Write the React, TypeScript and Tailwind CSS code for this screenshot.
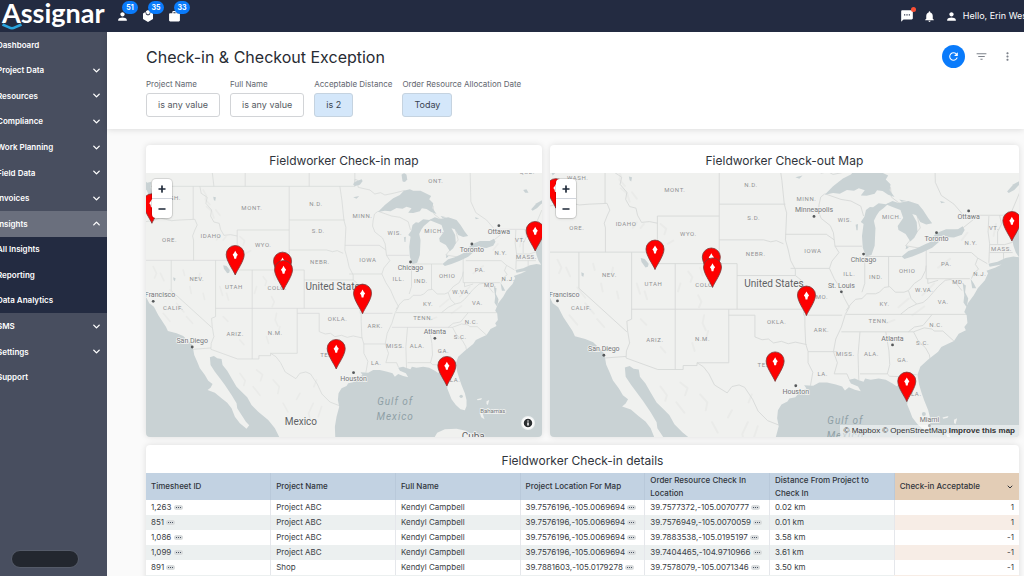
import React from 'react';
import clsx from 'clsx';
import { ChevronDown, ChevronUp, Plus, Minus, Info } from 'lucide-react';
import { MdPerson, MdNotifications, MdRefresh, MdFilterList, MdMoreVert, MdSms, MdWork } from 'react-icons/md';

interface NavItem {
  label: string;
  arrow?: 'down' | 'up';
  sub?: boolean;
}

interface MapView {
  width: number;
  height: number;
  scale: number;
  x: number;
  y: number;
}

interface City {
  name: string;
  x: number;
  y: number;
  side: 'above' | 'below';
  detail?: boolean;
}

const navItems: NavItem[] = [
  { label: 'Dashboard' },
  { label: 'Project Data', arrow: 'down' },
  { label: 'Resources', arrow: 'down' },
  { label: 'Compliance', arrow: 'down' },
  { label: 'Work Planning', arrow: 'down' },
  { label: 'Field Data', arrow: 'down' },
  { label: 'Invoices', arrow: 'down' },
  { label: 'Insights', arrow: 'up' },
  { label: 'All Insights', sub: true },
  { label: 'Reporting', sub: true },
  { label: 'Data Analytics', sub: true },
  { label: 'SMS', arrow: 'down' },
  { label: 'Settings', arrow: 'down' },
  { label: 'Support' },
];

const filters = [
  { id: 'project-name', label: 'Project Name', value: 'is any value', active: false },
  { id: 'full-name', label: 'Full Name', value: 'is any value', active: false },
  { id: 'distance', label: 'Acceptable Distance', value: 'is 2', active: true },
  { id: 'allocation-date', label: 'Order Resource Allocation Date', value: 'Today', active: true },
];

const columns = [
  'Timesheet ID',
  'Project Name',
  'Full Name',
  'Project Location For Map',
  'Order Resource Check In Location',
  'Distance From Project to Check In',
];

const rows = [
  { id: '1,263', project: 'Project ABC', name: 'Kendyl Campbell', location: '39.7576196,-105.0069694', checkIn: '39.7577372,-105.0070777', distance: '0.02 km', ok: '1' },
  { id: '851', project: 'Project ABC', name: 'Kendyl Campbell', location: '39.7576196,-105.0069694', checkIn: '39.7576949,-105.0070059', distance: '0.01 km', ok: '1' },
  { id: '1,086', project: 'Project ABC', name: 'Kendyl Campbell', location: '39.7576196,-105.0069694', checkIn: '39.7883538,-105.0195197', distance: '3.58 km', ok: '-1' },
  { id: '1,099', project: 'Project ABC', name: 'Kendyl Campbell', location: '39.7576196,-105.0069694', checkIn: '39.7404465,-104.9710966', distance: '3.61 km', ok: '-1' },
  { id: '891', project: 'Shop', name: 'Kendyl Campbell', location: '39.7881603,-105.0179278', checkIn: '39.7578079,-105.0071346', distance: '3.50 km', ok: '-1' },
];

// Both maps share one coordinate space; each view only pans and scales it
const checkInView: MapView = { width: 396, height: 264, scale: 0.3333, x: -6, y: -33 };
const checkOutView: MapView = { width: 470, height: 264, scale: 0.3965, x: -8, y: -64 };

const water = [
  // Pacific and Gulf of California
  'M-40 440L18 470L28 490L42 500L55 525L78 560L84 573L110 580L130 588L140 598L155 612L160 628L163 645L172 665L180 685L195 705L205 722L218 732L212 743L203 750L225 758L245 775L262 788L275 805L285 830L300 850L320 866L328 856L318 845L305 825L292 805L290 790L275 765L255 735L240 715L225 695L212 675L210 652L222 648L232 655L245 657L248 675L262 692L275 715L290 740L305 755L322 772L335 795L355 815L385 840L405 865L420 895V940H-40Z',
  // Gulf of Mexico and Atlantic
  'M588 940L585 860L590 830L598 800L594 780L596 760L605 745L620 738L625 730L640 727L650 715L668 705L662 697L685 698L700 690L720 690L742 695L758 700L765 710L775 702L790 708L805 712L798 700L780 692L775 683L790 680L800 684L812 688L816 680L830 683L850 680L868 683L885 692L895 699L905 692L920 690L928 705L925 725L922 745L930 765L935 778L948 795L962 808L975 811L980 798L980 780L975 760L965 735L958 715L952 695L948 670L955 650L975 632L1000 612L1008 600L1025 592L1040 585L1052 567L1070 558L1066 550L1074 540L1072 520L1066 512L1075 490L1090 470L1100 452L1118 432L1126 414L1122 408L1145 400L1160 392L1130 398L1127 390L1150 385L1170 376L1190 372L1204 374L1196 362L1190 345L1187 330L1192 312L1206 298L1260 270V940Z',
  // Puget Sound
  'M-40 110L10 118L22 128L34 125L32 140L36 160L28 168L20 150L5 146L-40 148Z',
  // Superior
  'M714 216L735 195L760 175L780 165L792 152L810 148L820 152L842 152L862 162L874 168L868 178L880 190L878 205L890 222L874 216L860 207L846 205L840 214L820 219L805 218L815 205L800 200L788 206L770 204L752 214L735 212Z',
  // Michigan
  'M818 255L828 247L836 248L850 238L868 240L876 238L862 250L852 258L845 268L838 282L842 300L840 345L832 368L818 372L810 350L808 320L812 290L805 285L814 272Z',
  // Huron and Georgian Bay
  'M868 240L885 232L900 237L925 232L950 240L962 255L975 275L985 288L970 291L955 285L945 268L935 265L946 285L948 310L940 325L930 334L918 315L900 305L898 295L912 275L905 255L885 247Z',
  // Erie
  'M908 372L925 358L945 352L970 340L995 330L1005 333L985 350L960 362L935 372L915 378Z',
  // Ontario and the St. Lawrence
  'M983 325L998 312L1020 303L1050 303L1062 296L1067 305L1060 317L1040 324L1010 322L995 328Z',
  'M1174 208L1190 190L1208 180L1206 190L1192 204L1178 212Z',
  // Chesapeake and Delaware
  'M1062 440L1070 445L1068 462L1076 478L1072 500L1064 488L1066 470Z',
  'M1082 428L1090 440L1096 452L1086 452Z',
  // inland lakes
  'M785 104Q793 95 800 104L802 118Q796 130 788 124Z',
  'M642 128L652 122L666 118L668 124L660 134L646 138L640 134Z',
  'M250 376L260 378L270 390L268 398L262 400L252 386Z',
  'M920 344L926 350L918 354Z',
  'M792 292L798 290L797 306L794 306Z',
  'M640 172L658 168L650 176Z',
  'M1150 150L1160 148L1166 158L1156 158Z',
  'M220 170L228 172L226 183L222 180Z',
  'M100 412L107 415L105 424L101 420Z',
  'M902 228L920 232L908 234Z',
  'M1005 232L1018 235L1008 238Z',
];

const islands = [
  'M884 892L892 878L915 868L950 866L978 872L1000 886L1040 894L1020 920H900Z',
  'M1011 778L1026 774L1024 779L1013 781Z',
  'M1040 784L1048 780L1044 795L1040 792Z',
  'M1020 818L1028 820L1034 838L1024 832Z',
  'M1054 806L1062 812L1064 822L1058 814Z',
];

const borders = [
  'M-40 139H645V118L652 120L655 142L690 150L705 162L722 158L735 165L760 160L792 152M213 60L222 139M316 60V139M508 60V139M645 60V139M990 60L993 185L1008 218L1040 240L1064 268L1165 268',
  'M792 152L840 168L880 198L882 222L900 236L945 262L955 300L918 345L960 352L1010 315L1060 302L1100 270',
  'M160 139V238M-40 248L18 245L45 240L60 234L95 242L120 240L165 238L172 255L165 270L158 288L161 300V361M-40 361H292',
  'M180 139L184 160L202 172L198 190L215 210L212 228L222 246L238 250L242 268L252 286L272 284L292 288M292 270V390M292 270H448M448 139V390M292 390H493M448 240H615',
  'M448 330H560L578 335L592 332L610 340M493 390V505M493 420H640M227 361V530M227 505H664M94 361V452L215 562M227 530L215 535L217 560L222 590L214 610L213 628M160 628L213 624',
  'M337 390V657M472 505V640H392V647H357V657H293L213 628M392 640L408 650L422 668L436 696L468 716L480 700L498 696L512 702L532 732L546 762L570 786L598 797',
  'M472 520H538V575L556 582L572 580L585 590L605 586L622 592L640 588L668 594M664 520V545L666 592L672 612V640L684 664L678 698M672 612H746M661 505V520H758',
  'M600 139L606 180L612 240L618 262L615 330L622 355L628 382L640 405L640 420L655 432L655 470L661 505M615 316H718M628 402H726M700 240L704 222L714 214M700 240L698 258L705 276L728 294L736 312L738 330',
  'M718 316L738 330L740 346L750 362L732 384L726 402L738 428L752 450L764 478L776 500L766 518L756 550L742 580L736 612L746 640L738 668H770L776 682M740 346H808M715 214L755 228L780 232L805 245L812 270',
  'M815 375V440L808 462M875 372V448M815 372H908M768 508L780 492L792 480L808 478L820 466L842 466L852 462L864 450L878 448L892 462L914 462L925 458L940 440L958 428L968 408L970 395M970 342V428H1080M978 362H1084',
  'M768 518H1072M756 562H938M925 562L940 550L962 546L985 518M925 458L932 478L946 492L962 488L974 478L988 462L1000 448L1018 432L1032 430L1046 440L1060 458M946 492L925 502L905 518M974 428V440L1000 432',
  'M803 562L798 620L800 684M868 562L876 610L878 645L872 668M803 668H872L878 674L925 676L930 670L946 670M938 562L950 585L968 602L978 620L980 632M938 562L965 552L985 555L990 560H1012L1045 590',
  'M1084 362L1100 376L1094 392L1102 404L1090 414L1084 428M1100 376L1124 390M1128 270L1126 310L1130 340L1128 388M1155 268L1160 290L1150 310V340M1130 342H1168L1188 336M1130 362H1188M1165 362V378M1165 268L1178 262L1184 300L1190 325M1184 262L1206 210',
];

const terrain = [
  'M190 150l10 18l-4 10l14 16M200 200l16 14l6 20M228 210l12 16M230 300l10 -14M250 300l8 -10M300 290l14 12l-4 14M318 340l14 -8M350 440l-6 20M370 410l10 14l-4 12M400 400l6 20M395 470l8 16l-6 14M410 520l-4 20l8 18M420 560l-6 22',
  'M40 380l10 20l-6 14M62 400l10 22M90 450l20 26M70 520l20 24M110 490l22 26M140 530l18 20M240 440l8 26M260 460l6 20M250 530l14 14M300 600l12 14M380 590l6 20M180 400l-4 20M130 390l4 16M190 460l4 18M150 440l4 20',
  'M350 690l18 14l-6 18M400 720l18 20l-4 20M430 790l14 26M520 790l-14 30l6 24M545 800l-10 30M480 760l-10 18M300 700l16 22l-4 14M340 740l20 26M530 720l-8 20',
  'M900 500l26 -22M935 520l30 -22M960 470l30 -30M870 540l20 -8M1000 400l30 -22M1060 330l14 -18M1140 320l6 -30',
];

const states: [string, number, number][] = [
  ['WASH.', 91, 173], ['MONT.', 336, 204], ['N.D.', 528, 192], ['S.D.', 535, 274], ['IDAHO', 213, 289], ['WYO.', 370, 315],
  ['ORE.', 89, 300], ['NEBR.', 540, 366], ['NEV.', 171, 418], ['UTAH', 282, 442], ['COLO.', 412, 445], ['CALIF.', 100, 503],
  ['ARIZ.', 286, 582], ['N.M.', 406, 579], ['OKLA.', 593, 537], ['TEX.', 563, 645], ['MINN.', 668, 227], ['WIS.', 765, 279],
  ['MICH.', 883, 272], ['IOWA', 684, 359], ['ILL.', 776, 417], ['IND.', 843, 423], ['OHIO', 922, 409], ['PA.', 1021, 390],
  ['N.Y.', 1083, 339], ['VT.', 1141, 300], ['MASS.', 1160, 352], ['N.J.', 1105, 416], ['MD.', 1051, 436], ['W.VA.', 965, 457],
  ['VA.', 1013, 488], ['KY.', 865, 491], ['TENN.', 850, 534], ['N.C.', 995, 545], ['S.C.', 961, 590], ['ARK.', 706, 558],
  ['MISS.', 766, 618], ['ALA.', 832, 619], ['GA.', 911, 632], ['FLA.', 940, 720], ['LA.', 709, 668], ['ONT.', 888, 124],
  ['QUE.', 1162, 97],
];

const cities: City[] = [
  { name: 'San Francisco', x: 40, y: 484, side: 'above' },
  { name: 'San Diego', x: 157, y: 621, side: 'above' },
  { name: 'Chicago', x: 812, y: 366, side: 'below' },
  { name: 'Ottawa', x: 1077, y: 257, side: 'below' },
  { name: 'Toronto', x: 996, y: 312, side: 'below' },
  { name: 'Atlanta', x: 885, y: 595, side: 'above' },
  { name: 'Houston', x: 641, y: 698, side: 'below' },
  { name: 'Minneapolis', x: 687, y: 271, side: 'above', detail: true },
  { name: 'St. Louis', x: 756, y: 461, side: 'above', detail: true },
  { name: 'Miami', x: 978, y: 799, side: 'above', detail: true },
];

const pins: [number, number][] = [
  [36, 250], [286, 405], [428, 425], [431, 450], [589, 687], [668, 521], [921, 738], [1186, 333],
];

const Pin = ({ x, y }: { x: number; y: number }) => (
  <g transform={`translate(${x} ${y})`}>
    <path
      d="M0 0C-2 -5 -9 -14 -9 -20.5A9 9 0 0 1 9 -20.5C9 -14 2 -5 0 0Z"
      fill="#fe0000"
      stroke="#7a3a3a"
      strokeWidth="0.8"
    />
    <path d="M0 -24.2L1.2 -22L2.6 -20.2L1.4 -18.6L0.9 -16.2H-0.9L-1.4 -18.6L-2.6 -20.2L-1.2 -22Z" fill="#fff" />
  </g>
);

const UsMap = ({ view, title, detailed = false }: { view: MapView; title: string; detailed?: boolean }) => {
  const px = (x: number) => view.x + x * view.scale;
  const py = (y: number) => view.y + y * view.scale;

  return (
    <svg
      role="img"
      aria-label={title}
      viewBox={`0 0 ${view.width} ${view.height}`}
      preserveAspectRatio="xMidYMid slice"
      className="block h-full w-full bg-[#f0f1ef] font-['Roboto',sans-serif]"
    >
      <g transform={`translate(${view.x} ${view.y}) scale(${view.scale})`}>
        <g fill="none" stroke="#eaebe9" strokeWidth="5" strokeLinejoin="round" strokeLinecap="round">
          {terrain.map((d) => (
            <path key={d} d={d} />
          ))}
        </g>
        <g fill="none" stroke="#d6d8d7" strokeWidth="2.2" strokeLinejoin="round">
          {borders.map((d) => (
            <path key={d} d={d} />
          ))}
        </g>
        <g fill="#c9d2d4" strokeLinejoin="round">
          {water.map((d) => (
            <path key={d} d={d} />
          ))}
        </g>
        <circle cx="964" cy="769" r="5" fill="#c9d2d4" />
        <g fill="#f0f1ef">
          {islands.map((d) => (
            <path key={d} d={d} />
          ))}
        </g>
      </g>

      <g textAnchor="middle" fill="#909294" className="text-[6px] tracking-widest">
        {states.map(([name, x, y]) => (
          <text key={name} x={px(x)} y={py(y) + 2}>
            {name}
          </text>
        ))}
        {detailed && <text x={px(707)} y={py(473) + 2}>MO.</text>}
      </g>

      <g textAnchor="middle" fill="#75777a" stroke="#f3f4f2" strokeWidth="1.5" paintOrder="stroke" className="text-[7px]">
        {cities
          .filter((city) => detailed || !city.detail)
          .map((city) => (
            <g key={city.name}>
              <circle cx={px(city.x)} cy={py(city.y)} r="1.4" fill="#55585a" stroke="none" />
              <text x={px(city.x)} y={py(city.y) + (city.side === 'above' ? -4 : 8)}>
                {city.name}
              </text>
            </g>
          ))}
        {!detailed && <text x={px(1059)} y={py(812) + 2} className="text-[6px]">Bahamas</text>}
      </g>

      <g textAnchor="middle" fill="#8fa0a6" className="text-[10px] italic tracking-widest">
        <text x={px(766)} y={py(784) + 4}>Gulf of</text>
        <text x={px(766)} y={py(784) + 19}>Mexico</text>
      </g>

      <g textAnchor="middle" fill="#5f6265" stroke="#f3f4f2" strokeWidth="1.5" paintOrder="stroke" className="text-[10px]">
        <text x={px(586)} y={py(439) + 4}>United States</text>
        {!detailed && <text x={px(483)} y={py(843) + 4}>Mexico</text>}
        {!detailed && <text x={px(1000)} y={py(889) + 4}>Cuba</text>}
      </g>

      {pins.map(([x, y]) => (
        <Pin key={`${x}-${y}`} x={px(x)} y={py(y)} />
      ))}
    </svg>
  );
};

const ZoomControl = () => (
  <div className="absolute top-1.5 left-1.5 flex w-5 flex-col divide-y divide-gray-300 rounded bg-white text-gray-800 shadow ring-1 ring-black/10">
    <button aria-label="Zoom in" className="flex h-5 items-center justify-center">
      <Plus size={10} strokeWidth={4} />
    </button>
    <button aria-label="Zoom out" className="flex h-[19px] items-center justify-center">
      <Minus size={10} strokeWidth={4} />
    </button>
  </div>
);

const Card = ({ title, className, children }: { title: string; className?: string; children: React.ReactNode }) => (
  <section className={clsx('overflow-hidden rounded bg-white shadow-[0_0_6px_rgba(0,0,0,0.12)]', className)}>
    <h2 className="flex h-7 items-center justify-center pt-1 text-[12px] text-[#30343b]">{title}</h2>
    {children}
  </section>
);

const CountBadge = ({ label, count, children }: { label: string; count: number; children: React.ReactNode }) => (
  <button aria-label={label} className="relative flex size-3 items-center justify-center text-white">
    {children}
    <span className="absolute -top-[9px] left-1.5 flex h-[13px] w-4 items-center justify-center rounded-full bg-[#0a7bfb] text-[7px] leading-[9px] font-bold">
      {count}
    </span>
  </button>
);

const MoreChip = () => (
  <button aria-label="More" className="inline-flex h-[5px] w-[9px] items-center justify-center gap-px rounded-full bg-[#d9dcdd] align-middle">
    <span className="size-px bg-gray-600" />
    <span className="size-px bg-gray-600" />
    <span className="size-px bg-gray-600" />
  </button>
);

const TopBar = () => (
  <header className="relative flex h-8 shrink-0 items-center bg-[#232b41] text-white">
    <a href="#home" className="relative h-8 w-[116px] shrink-0 pl-0.5 font-['Lato',sans-serif] text-[27px] leading-[26px]">
      <span className="font-bold">Assignar</span>
      <svg viewBox="0 0 22 7" className="absolute bottom-0.5 left-px h-[7px] w-[22px]" fill="none">
        <path d="M1.5 1.5L8 4.4Q11 6 14 4.4L20.5 1.5" stroke="#2aa5df" strokeWidth="2.6" />
      </svg>
    </a>
    <div className="flex items-center gap-[14px]">
      <CountBadge label="People" count={51}>
        <MdPerson size={13} className="shrink-0" />
      </CountBadge>
      <CountBadge label="Assets" count={35}>
        <svg viewBox="0 0 12 12" className="size-3" fill="currentColor">
          <path d="M1 3.4L3.4 2L4 4.6L6 5.6L8 4.6L8.6 2L11 3.4V9L6 12L1 9Z" />
          <path d="M6 0L8.2 1.2L7.4 3.8L6 4.4L4.6 3.8L3.8 1.2Z" />
        </svg>
      </CountBadge>
      <CountBadge label="Jobs" count={33}>
        <MdWork size={13} className="shrink-0" />
      </CountBadge>
    </div>
    <div className="ml-auto flex shrink-0 items-center">
      <button aria-label="Messages" className="relative mr-[9px]">
        <MdSms size={14} />
        <span className="absolute -top-0.5 -right-0.5 size-[5px] rounded-full bg-[#fb4f34]" />
      </button>
      <button aria-label="Notifications" className="mr-[9px]">
        <MdNotifications size={13} />
      </button>
      <MdPerson size={13} />
      <a href="#account" className="-mr-1.5 ml-[5px] text-[9px] whitespace-nowrap">
        Hello, Erin West
      </a>
    </div>
  </header>
);

const Sidebar = () => (
  <aside className="flex w-[107px] shrink-0 flex-col overflow-hidden bg-[#484e5f] text-white">
    <nav>
      <ul className="grid h-[358px] auto-rows-fr">
        {navItems.map((item) => (
          <li
            key={item.label}
            className={clsx(item.sub && 'bg-[#232b41]', item.arrow === 'up' && 'bg-[#6a6f7d]')}
          >
            <a href="#nav" className="-ml-[3px] flex h-full items-center justify-between pr-[5px] text-[8px] font-semibold whitespace-nowrap">
              {item.label}
              {item.arrow === 'down' && <ChevronDown size={11} strokeWidth={3} />}
              {item.arrow === 'up' && <ChevronUp size={11} strokeWidth={3} />}
            </a>
          </li>
        ))}
      </ul>
    </nav>
    <div className="mt-auto mb-2 ml-[11px] h-[18px] w-[68px] rounded-full border border-[#555b69] bg-[#23272f]" />
  </aside>
);

const DetailsTable = () => (
  <table className="w-full table-fixed border-collapse text-left text-[8px] text-[#3a3e45]">
    <thead>
      <tr className="h-[27px] bg-[#c2d2e2] leading-[13px] text-[#30343b]">
        {columns.map((column) => (
          <th key={column} className="border-r border-[#b9c9da] px-[5px] py-0 font-medium">
            {column}
          </th>
        ))}
        <th className="bg-[#e3cdb6] px-[5px] py-0 font-medium">
          <button className="flex w-full items-center justify-between">
            Check-in Acceptable
            <ChevronDown size={8} strokeWidth={3} />
          </button>
        </th>
      </tr>
    </thead>
    <tbody>
      {rows.map((row) => (
        <tr key={row.id} className="group h-[15px] leading-[15px] whitespace-nowrap even:bg-[#ecf0f0]">
          <td className="border-r border-gray-200 px-[5px] py-0">{row.id} <MoreChip /></td>
          <td className="border-r border-gray-200 px-[5px] py-0">{row.project}</td>
          <td className="border-r border-gray-200 px-[5px] py-0">{row.name}</td>
          <td className="border-r border-gray-200 px-[5px] py-0">{row.location} <MoreChip /></td>
          <td className="border-r border-gray-200 px-[5px] py-0">{row.checkIn} <MoreChip /></td>
          <td className="border-r border-gray-200 px-[5px] py-0">{row.distance}</td>
          <td className="px-[5px] py-0 text-right group-even:bg-[#f7ede6]">{row.ok}</td>
        </tr>
      ))}
      <tr className="h-[15px] bg-[#ecf0f0]">
        <td colSpan={6} />
        <td className="bg-[#f7ede6]" />
      </tr>
    </tbody>
  </table>
);

const App: React.FC = () => {
  return (
    <div className="flex h-screen flex-col overflow-hidden bg-[#fafafa] font-['Inter',sans-serif]">
      <TopBar />
      <div className="flex min-h-0 flex-1">
        <Sidebar />
        <main className="min-w-0 flex-1">
          <div className="bg-white pt-3 pr-[5px] pb-3 pl-[39px] shadow-[0_1px_6px_rgba(0,0,0,0.12)]">
            <div className="flex h-[25px] items-center justify-between">
              <h1 className="text-base whitespace-nowrap text-[#272b33]">Check-in &amp; Checkout Exception</h1>
              <div className="flex items-center text-[#7d828b]">
                <button aria-label="Refresh" className="mr-[10px] flex size-[23px] items-center justify-center rounded-full bg-[#0a7bfb] text-white">
                  <MdRefresh size={13} />
                </button>
                <button aria-label="Filters" className="mr-[13px]">
                  <MdFilterList size={13} />
                </button>
                <button aria-label="More options" className="mr-[5px]">
                  <MdMoreVert size={13} />
                </button>
              </div>
            </div>
            <div className="mt-2.5 flex gap-2.5">
              {filters.map((filter) => (
                <div key={filter.id} className="flex flex-col items-start">
                  <label htmlFor={filter.id} className="mb-[3px] text-[8px] leading-[11px] whitespace-nowrap text-[#62666e]">
                    {filter.label}
                  </label>
                  <button
                    id={filter.id}
                    className={clsx(
                      'h-6 rounded-[3px] border px-[11px] text-[9px] whitespace-nowrap',
                      filter.active ? 'border-[#c5d3e0] bg-[#d4e7fa] text-[#3a4350]' : 'border-[#d2d4d7] bg-white text-[#555a62]'
                    )}
                  >
                    {filter.value}
                  </button>
                </div>
              ))}
            </div>
          </div>

          <div className="grid grid-cols-24 gap-2 pt-4 pr-[5px] pl-[39px]">
            <Card title="Fieldworker Check-in map" className="col-span-11">
              <div className="relative h-[264px]">
                <UsMap view={checkInView} title="Fieldworker Check-in map" />
                <ZoomControl />
                <button aria-label="Attribution" className="absolute right-[7px] bottom-[7px] flex size-3.5 items-center justify-center rounded-full bg-white/70">
                  <Info size={12} fill="#2c2f31" color="#fff" strokeWidth={3} className="shrink-0" />
                </button>
              </div>
            </Card>
            <Card title="Fieldworker Check-out Map" className="col-span-13">
              <div className="relative h-[264px]">
                <UsMap view={checkOutView} title="Fieldworker Check-out Map" detailed />
                <ZoomControl />
                <div className="absolute right-0 bottom-0 flex h-3 items-center gap-0.5 bg-white/50 px-1 font-['Liberation_Sans',sans-serif] text-[8px] whitespace-nowrap text-[#333]">
                  <a href="#mapbox">© Mapbox</a>
                  <a href="#osm">© OpenStreetMap</a>
                  <a href="#improve" className="font-bold">Improve this map</a>
                </div>
              </div>
            </Card>
            <Card title="Fieldworker Check-in details" className="col-span-24 rounded-b-none">
              <DetailsTable />
            </Card>
          </div>
        </main>
      </div>
    </div>
  );
};

export default App;
